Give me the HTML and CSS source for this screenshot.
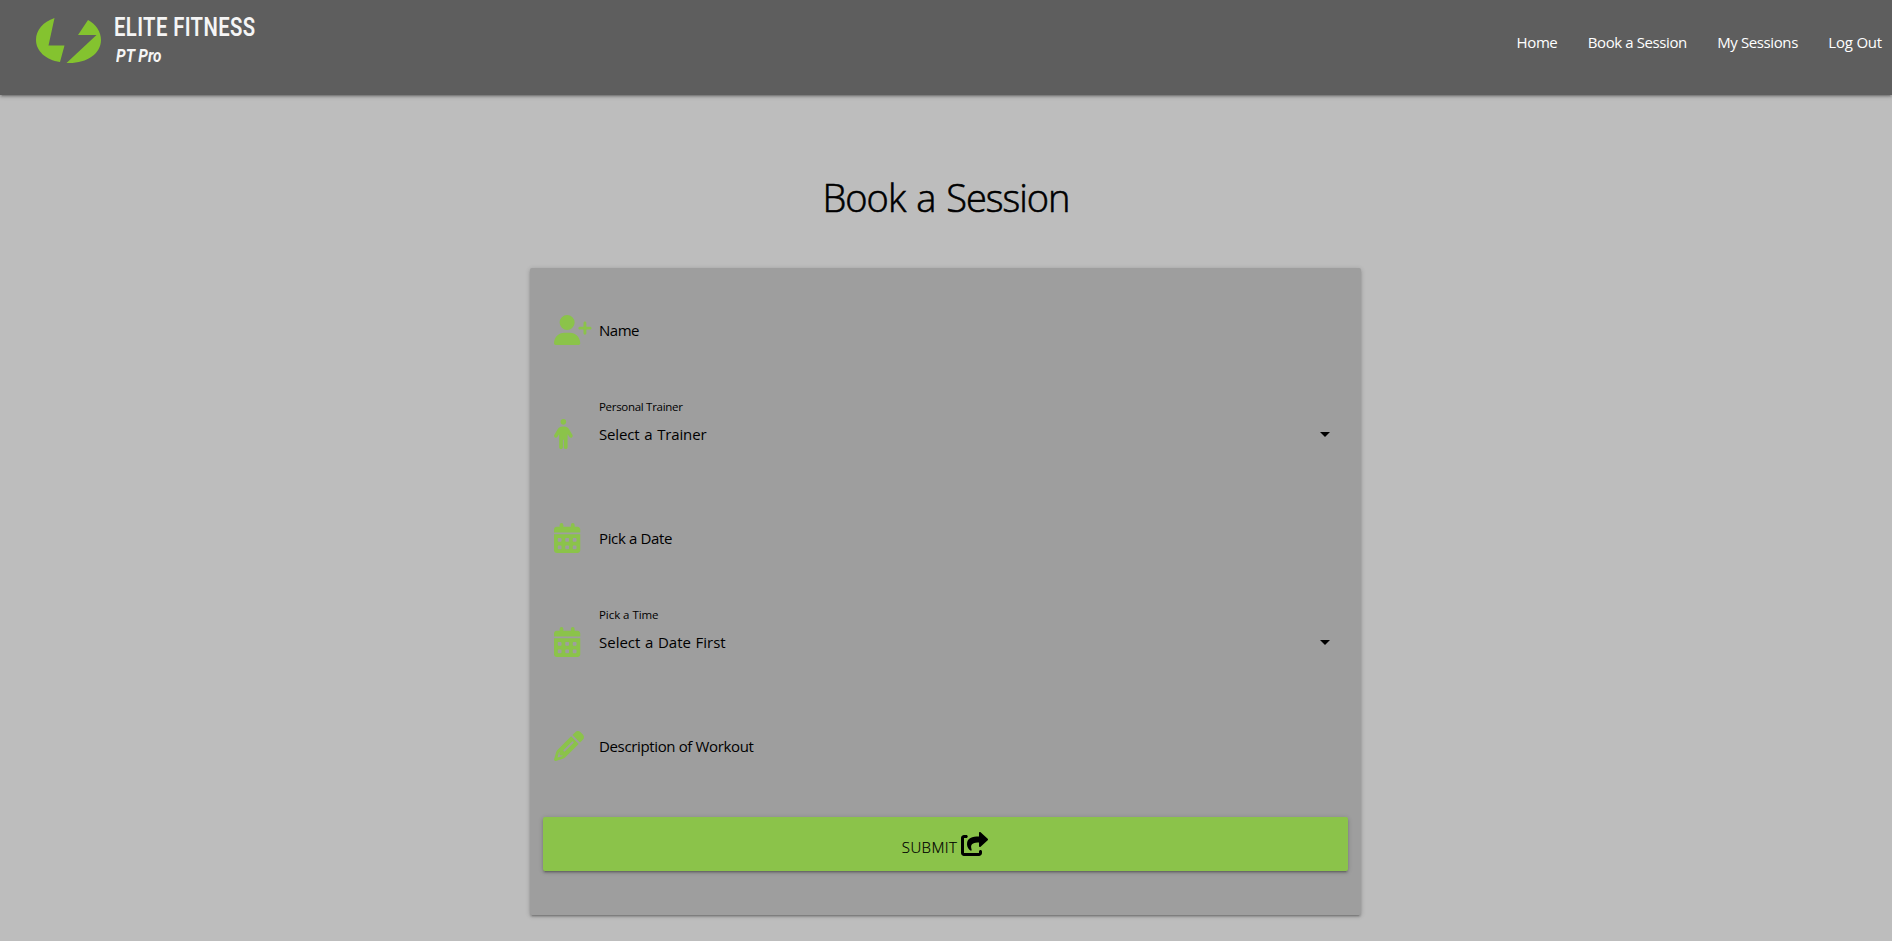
FILE: index.html
```html
<!DOCTYPE html>
<html lang="en">
<head>
<meta charset="utf-8">
<title>Elite Fitness PT Pro</title>
<link rel="stylesheet" href="styles.css">
</head>
<body>
<nav class="navbar">
  <a class="brand" href="#">
    <svg class="logo" viewBox="0 0 66 46"><path d="M18.500 0C7 4 0 12 0 22C0 33 10 42 24 44L28.500 27.500H12.500ZM52 2L42 17H60.500L30.500 45C50 46 65 36 65 22C65 14 60 6 52 2Z"/></svg>
    <span class="brand-text"><span class="brand-name">ELITE FITNESS</span><span class="brand-sub">PT Pro</span></span>
  </a>
  <ul class="menu">
    <li><a class="l-home" href="#">Home</a></li>
    <li><a class="l-book" href="#">Book a Session</a></li>
    <li><a class="l-mine" href="#">My Sessions</a></li>
    <li><a class="l-out" href="#">Log Out</a></li>
  </ul>
</nav>
<main>
  <h1 class="title">Book a Session</h1>
  <form class="card">
    <div class="field">
      <svg class="icon" viewBox="0 0 640 512"><path d="M96 128a128 128 0 1 1 256 0A128 128 0 1 1 96 128zM0 482.300C0 383.800 79.800 304 178.300 304h91.400C368.200 304 448 383.800 448 482.300c0 16.400-13.300 29.700-29.700 29.700H29.700C13.300 512 0 498.700 0 482.300zM504 312V248H440c-13.300 0-24-10.700-24-24s10.700-24 24-24h64V136c0-13.300 10.700-24 24-24s24 10.700 24 24v64h64c13.300 0 24 10.700 24 24s-10.700 24-24 24H552v64c0 13.300-10.700 24-24 24s-24-10.700-24-24z"/></svg>
      <div class="control"><span class="value v-name">Name</span></div>
    </div>
    <div class="field">
      <svg class="icon" viewBox="0 0 640 512"><path d="M112 48a48 48 0 1 1 96 0A48 48 0 1 1 112 48zm40 304v128c0 17.700-14.300 32-32 32s-32-14.300-32-32V256.900L59.400 304.500c-9.100 15.100-28.800 20-43.900 10.900s-20-28.800-10.900-43.900l58.300-97c17.400-28.900 48.600-46.600 82.300-46.600h29.700c33.700 0 64.900 17.700 82.300 46.600l58.300 97c9.100 15.100 4.200 34.800-10.900 43.900s-34.800 4.200-43.900-10.900L232 256.900V480c0 17.700-14.300 32-32 32s-32-14.300-32-32V352H152z"/></svg>
      <div class="control"><label class="caption c-trainer">Personal Trainer</label><span class="value v-trainer">Select a Trainer</span></div>
      <svg class="caret" viewBox="0 0 10 5"><path d="M0 0h10L5 5z"/></svg>
    </div>
    <div class="field">
      <svg class="icon" viewBox="0 0 640 512"><path fill-rule="evenodd" d="M0 464c0 26.500 21.500 48 48 48h352c26.500 0 48-21.500 48-48V192H0zM64 268a12 12 0 0 1 12-12h40a12 12 0 0 1 12 12v40a12 12 0 0 1-12 12H76a12 12 0 0 1-12-12zM192 268a12 12 0 0 1 12-12h40a12 12 0 0 1 12 12v40a12 12 0 0 1-12 12h-40a12 12 0 0 1-12-12zM320 268a12 12 0 0 1 12-12h40a12 12 0 0 1 12 12v40a12 12 0 0 1-12 12h-40a12 12 0 0 1-12-12zM64 396a12 12 0 0 1 12-12h40a12 12 0 0 1 12 12v40a12 12 0 0 1-12 12H76a12 12 0 0 1-12-12zM192 396a12 12 0 0 1 12-12h40a12 12 0 0 1 12 12v40a12 12 0 0 1-12 12h-40a12 12 0 0 1-12-12zM320 396a12 12 0 0 1 12-12h40a12 12 0 0 1 12 12v40a12 12 0 0 1-12 12h-40a12 12 0 0 1-12-12zM400 64h-48V32a32 32 0 0 0-64 0v32H160V32a32 32 0 0 0-64 0v32H48C21.500 64 0 85.500 0 112v48h448v-48c0-26.500-21.500-48-48-48z"/></svg>
      <div class="control"><span class="value v-date">Pick a Date</span></div>
    </div>
    <div class="field">
      <svg class="icon" viewBox="0 0 640 512"><path fill-rule="evenodd" d="M0 464c0 26.500 21.500 48 48 48h352c26.500 0 48-21.500 48-48V192H0zM64 268a12 12 0 0 1 12-12h40a12 12 0 0 1 12 12v40a12 12 0 0 1-12 12H76a12 12 0 0 1-12-12zM192 268a12 12 0 0 1 12-12h40a12 12 0 0 1 12 12v40a12 12 0 0 1-12 12h-40a12 12 0 0 1-12-12zM320 268a12 12 0 0 1 12-12h40a12 12 0 0 1 12 12v40a12 12 0 0 1-12 12h-40a12 12 0 0 1-12-12zM64 396a12 12 0 0 1 12-12h40a12 12 0 0 1 12 12v40a12 12 0 0 1-12 12H76a12 12 0 0 1-12-12zM192 396a12 12 0 0 1 12-12h40a12 12 0 0 1 12 12v40a12 12 0 0 1-12 12h-40a12 12 0 0 1-12-12zM320 396a12 12 0 0 1 12-12h40a12 12 0 0 1 12 12v40a12 12 0 0 1-12 12h-40a12 12 0 0 1-12-12zM400 64h-48V32a32 32 0 0 0-64 0v32H160V32a32 32 0 0 0-64 0v32H48C21.500 64 0 85.500 0 112v48h448v-48c0-26.500-21.500-48-48-48z"/></svg>
      <div class="control"><label class="caption c-time">Pick a Time</label><span class="value v-time">Select a Date First</span></div>
      <svg class="caret" viewBox="0 0 10 5"><path d="M0 0h10L5 5z"/></svg>
    </div>
    <div class="field">
      <svg class="icon" viewBox="0 0 640 512"><path fill-rule="evenodd" d="M421.700 220.300L188.500 453.400C178.100 463.800 165.200 471.500 151.100 475.600L30.800 511C22.300 513.500 13.200 511.200 7 504.900C.8 498.800-1.500 489.700 1 481.200L36.400 360.900C40.500 346.800 48.200 333.900 58.600 323.500L291.700 90.300zM492.700 58.700C517.700 83.700 517.700 124.300 492.700 149.300L444.300 197.700L314.300 67.700L362.700 19.300C387.700-5.700 428.300-5.700 453.300 19.300zM165 325l144-144a16 16 0 0 1 22.600 22.600l-144 144A16 16 0 0 1 165 325zM96 353.900L92.500 357.400C87.800 362.200 84.300 368 82.400 374.400L59.400 452.600L137.600 429.600C144 427.700 149.800 424.200 154.600 419.500L158.100 416H112C103.200 416 96 408.800 96 400z"/></svg>
      <div class="control"><span class="value v-desc">Description of Workout</span></div>
    </div>
    <button class="submit" type="button"><span class="submit-text">SUBMIT</span><svg class="share" viewBox="0 0 576 512"><path d="M568.900 143.500l-150.900-138.200C404.800-6.800 384 3.100 384 21.500V96C241.200 97.600 128 126.100 128 260.600c0 54.300 35.200 108.100 74.080 136.200 12.140 8.781 29.420-2.238 24.940-16.460C186.700 252.200 256 224 384 223.100v74.200c0 18.820 21.020 28.230 34.020 16.120l150.900-138.200c9.438-8.652 9.438-23.052-.02-31.720zM416 384c-17.670 0-32 14.330-32 32v32H64V128h48c17.670 0 32-14.330 32-32s-14.330-32-32-32H64C28.650 64 0 92.650 0 128v320c0 35.350 28.650 64 64 64h320c35.350 0 64-28.650 64-64v-32c0-17.670-14.330-32-32-32z"/></svg></button>
  </form>
</main>
</body>
</html>
```
FILE: styles.css
```css
* { box-sizing: border-box; }
body {
  margin: 0;
  height: 941px;
  overflow: hidden;
  background: #bdbdbd;
  color: #000;
  font-family: "Open Sans", "Noto Sans", sans-serif;
}
.navbar {
  display: flex;
  justify-content: space-between;
  height: 95px;
  padding: 0 10px 0 36px;
  background: #5e5e5e;
  box-shadow: 0 2px 2px 0 rgba(0,0,0,.14), 0 3px 1px -2px rgba(0,0,0,.12), 0 1px 5px 0 rgba(0,0,0,.2);
}
.brand { display: flex; text-decoration: none; color: #f5f5f5; }
.logo { width: 66px; height: 46px; margin-top: 17.500px; fill: #84c32f; }
.brand-text { display: flex; flex-direction: column; margin-left: 12px; padding-top: 11px; font-family: Roboto, sans-serif; }
.brand-name { font-size: 26px; line-height: 32px; font-weight: 600; letter-spacing: .5px; transform: scaleX(.779); transform-origin: 0 0; white-space: nowrap; }
.brand-sub { margin-left: 2px; font-size: 19px; line-height: 25px; font-weight: 700; font-style: italic; transform: scaleX(.81); transform-origin: 0 0; }
.menu { display: flex; gap: 30.400px; margin: 0; padding: 0; list-style: none; line-height: 85px; font-size: 15px; }
.menu a { color: #fff; text-decoration: none; letter-spacing: -.4px; }
.menu .l-out { letter-spacing: -.2px; }
.title { margin: 73px 0 41px; text-align: center; font-size: 38px; line-height: 59px; font-weight: 300; letter-spacing: -1px; word-spacing: 2px; -webkit-text-stroke: .6px #000; }
.card {
  width: 831px;
  height: 647px;
  margin: 0 0 0 530px;
  padding: 29px 13px 0;
  background: #9e9e9e;
  border-radius: 2px;
  box-shadow: 0 2px 2px 0 rgba(0,0,0,.14), 0 3px 1px -2px rgba(0,0,0,.12), 0 1px 5px 0 rgba(0,0,0,.2);
}
.field { display: flex; align-items: flex-start; height: 104px; padding: 18px 18px 0 11px; }
.icon { flex: none; width: 37.500px; height: 30px; fill: #8bc34a; }
.control { display: flex; flex-direction: column; justify-content: flex-end; flex: 1; height: 30px; margin-left: 7.500px; white-space: nowrap; }
.caption { font-size: 11.500px; line-height: 16px; margin-bottom: 4px; }
.c-trainer { letter-spacing: -.3px; }
.c-time { letter-spacing: -.05px; }
.value { font-size: 15px; line-height: 30px; letter-spacing: -.36px; }
.v-name { letter-spacing: -.5px; }
.v-trainer { letter-spacing: -.15px; word-spacing: 1px; }
.v-time { letter-spacing: 0; word-spacing: .7px; }
.caret { width: 10px; height: 5px; margin-top: 13px; }
.submit {
  display: flex;
  justify-content: center;
  width: 805px;
  height: 54px;
  padding: 0;
  border: 0;
  border-radius: 2px;
  background: #8bc34a;
  color: #000;
  font: 300 15px/60px "Open Sans", sans-serif;
  box-shadow: 0 2px 2px 0 rgba(0,0,0,.14), 0 3px 1px -2px rgba(0,0,0,.12), 0 1px 5px 0 rgba(0,0,0,.2);
}
.submit-text { letter-spacing: .4px; -webkit-text-stroke: .2px #000; }
.share { width: 27px; height: 24px; margin: 15px 1px 0 4px; }
```
